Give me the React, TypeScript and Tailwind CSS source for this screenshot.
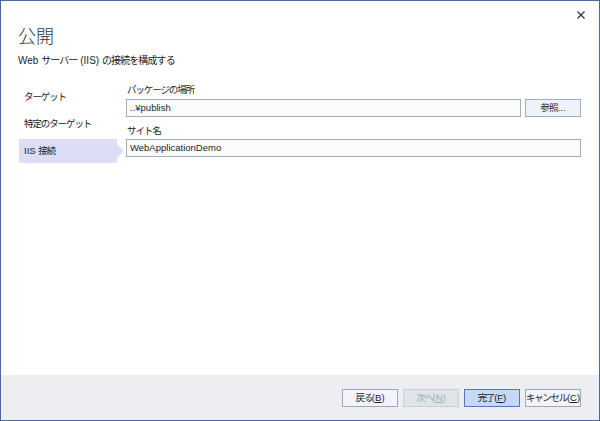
import React from "react";

const font = "font-['Liberation_Sans','Noto_Sans_CJK_JP',sans-serif]";

// narrow Japanese runs, Latin stays normal width
function J({ children, t = "tracking-[-1.1px]" }: { children: React.ReactNode; t?: string }) {
  return <span className={t}>{children}</span>;
}

function NavItem({ label, active }: { label: React.ReactNode; active?: boolean }) {
  return (
    <div
      className={`relative flex h-[24px] items-center whitespace-pre pl-[5px] text-[9.5px] text-[#1e1e1e] ${
        active ? "bg-[#dcdef7]" : ""
      }`}
    >
      {label}
      {active && (
        <div className="absolute right-[-7px] top-1/2 h-0 w-0 -translate-y-1/2 border-y-[7px] border-l-[7px] border-y-transparent border-l-[#dcdef7]" />
      )}
    </div>
  );
}

function FooterButton({
  jp,
  keyChar,
  kind,
}: {
  jp: string;
  keyChar: string;
  kind?: "primary" | "disabled";
}) {
  const styles =
    kind === "primary"
      ? "bg-[#c7d7f6] border-[#5475c4] text-[#1e1e1e]"
      : kind === "disabled"
        ? "bg-[#dfe3ea] border-[#c9cfd9] text-[#a3a9b3]"
        : "bg-[#f1f4fb] border-[#9ea8b8] text-[#1e1e1e]";
  return (
    <button
      className={`flex h-[18px] w-[56px] items-center justify-center whitespace-nowrap border text-[9.5px] leading-none ${styles}`}
    >
      <span className="tracking-[-1.3px]">{jp}</span>
      <span>
        (<u>{keyChar}</u>)
      </span>
    </button>
  );
}

export default function App() {
  return (
    <div
      className={`relative flex h-[421px] w-[600px] flex-col border border-[#4a6a9e] bg-white ${font}`}
    >
      <button className="absolute right-[12px] top-[8px] flex h-[12px] w-[12px] items-center justify-center">
        <svg width="8" height="8" viewBox="0 0 8 8">
          <path d="M0.5 0.5L7.5 7.5M7.5 0.5L0.5 7.5" stroke="#333" strokeWidth="1.2" />
        </svg>
      </button>

      <div className="pl-[17px] pt-[24px]">
        <div className="text-[18px] font-light leading-[24px] text-[#333]">公開</div>
        <div className="mt-[4px] whitespace-pre text-[10px] leading-[16px] text-[#1e1e1e]">
          {"Web "}
          <J t="tracking-[-0.9px]">サーバー</J>
          {" (IIS) "}
          <J t="tracking-[-0.9px]">の接続を構成する</J>
        </div>
      </div>

      <div className="mt-[13px] flex flex-1 pl-[18px] pr-[18px]">
        <div className="flex w-[98px] flex-col gap-[3px] pt-[3px]">
          <NavItem label={<J>ターゲット</J>} />
          <NavItem label={<J>特定のターゲット</J>} />
          <NavItem
            label={
              <>
                {"IIS "}
                <J>接続</J>
              </>
            }
            active
          />
        </div>

        <div className="ml-[9px] flex flex-1 flex-col">
          <div className="pl-[1px] text-[9.5px] leading-[16px] tracking-[-1.1px] text-[#1e1e1e]">
            パッケージの場所
          </div>
          <div className="mt-[1px] flex gap-[4px]">
            <div className="flex h-[18px] flex-1 items-center border border-[#a3adbd] bg-[#fbfbfb] pl-[3px] text-[9.5px] text-[#1e1e1e]">
              ..¥publish
            </div>
            <button className="flex h-[18px] w-[56px] items-center justify-center border border-[#a3adbd] bg-[#eef2fb] text-[9.5px] text-[#1e1e1e]">
              <span className="tracking-[-0.8px]">参照</span>...
            </button>
          </div>
          <div className="mt-[6px] pl-[1px] text-[9.5px] leading-[16px] tracking-[-1.1px] text-[#1e1e1e]">
            サイト名
          </div>
          <div className="flex h-[18px] items-center border border-[#a3adbd] bg-[#fbfbfb] pl-[3px] text-[9.5px] text-[#1e1e1e]">
            WebApplicationDemo
          </div>
        </div>
      </div>

      <div className="flex h-[45px] items-center justify-end gap-[5px] bg-[#eeeef2] pr-[18px]">
        <FooterButton jp="戻る" keyChar="B" />
        <FooterButton jp="次へ" keyChar="N" kind="disabled" />
        <FooterButton jp="完了" keyChar="F" kind="primary" />
        <FooterButton jp="キャンセル" keyChar="C" />
      </div>
    </div>
  );
}
